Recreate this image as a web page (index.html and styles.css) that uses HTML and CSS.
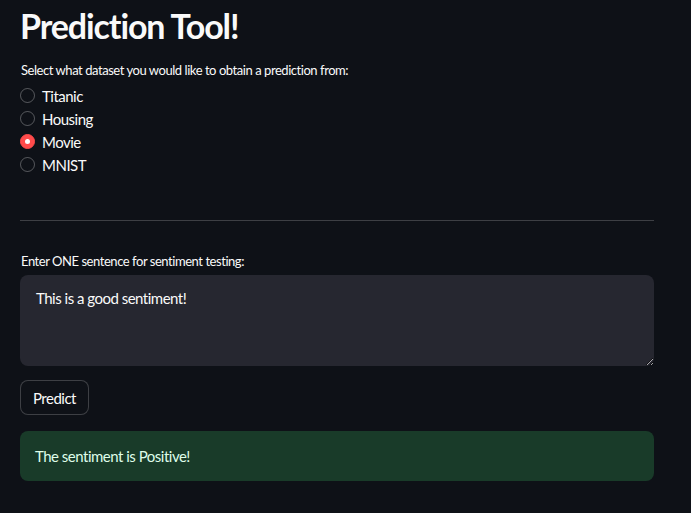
FILE: index.html
```html
<!DOCTYPE html>
<html>
<head>
<meta charset="utf-8">
<link rel="stylesheet" href="styles.css">
</head>
<body>
<main class="page">
  <h1 class="title">Prediction Tool!</h1>
  <div class="field">
    <div class="label">Select what dataset you would like to obtain a prediction from:</div>
    <div class="radios">
      <div class="radio"><span class="dot"></span><span>Titanic</span></div>
      <div class="radio"><span class="dot"></span><span>Housing</span></div>
      <div class="radio checked"><span class="dot"></span><span>Movie</span></div>
      <div class="radio"><span class="dot"></span><span>MNIST</span></div>
    </div>
  </div>
  <hr class="divider">
  <div class="field">
    <div class="label">Enter ONE sentence for sentiment testing:</div>
    <textarea class="area">This is a good sentiment!</textarea>
  </div>
  <button class="btn">Predict</button>
  <div class="success">The sentiment is Positive!</div>
</main>
</body>
</html>
```
FILE: styles.css
```css
* { box-sizing: border-box; }
html, body { margin: 0; padding: 0; background: #0e1117; }
body {
  color: #fafafa;
  font-family: "Lato", "Noto Sans", sans-serif;
}
.page {
  width: 634px;
  margin-left: 20px;
  display: flex;
  flex-direction: column;
}
.title {
  margin: 0;
  padding-top: 6px;
  font-size: 34px;
  letter-spacing: -1.1px;
  font-weight: 700;
  line-height: 40px;
  height: 46px;
}
.field { display: flex; flex-direction: column; }
.label {
  font-size: 13px;
  letter-spacing: -0.45px;
  line-height: 18px;
  margin-top: 15px;
  height: 23px;
  padding-left: 1px;
}
.radios { display: flex; flex-direction: column; }
.radio {
  display: flex;
  align-items: center;
  height: 23px;
  font-size: 15px;
  letter-spacing: -0.5px;
  gap: 7px;
}
.dot {
  width: 15px;
  height: 15px;
  border-radius: 50%;
  border: 1px solid rgba(250,250,250,0.3);
  flex: none;
}
.radio.checked .dot {
  background: #ff4b4b;
  border-color: #ff4b4b;
  display: flex;
  align-items: center;
  justify-content: center;
}
.radio.checked .dot::after {
  content: "";
  width: 5px;
  height: 5px;
  border-radius: 50%;
  background: #fff;
}
.divider {
  margin: 44px 0 0;
  border: none;
  border-top: 1px solid rgba(250,250,250,0.2);
  height: 0;
}
.divider + .field .label { margin-top: 31px; }
.area {
  width: 100%;
  height: 91px;
  background: #262730;
  border: none;
  border-radius: 8px;
  color: #fafafa;
  font-family: inherit;
  font-size: 15px;
  letter-spacing: -0.5px;
  padding: 14px 16px;
  resize: vertical;
  outline: none;
  margin-top: 0;
  display: block;
}
.btn {
  align-self: flex-start;
  margin-top: 14px;
  height: 35px;
  padding: 0 12px;
  background: #0e1117;
  color: #fafafa;
  border: 1px solid rgba(250,250,250,0.2);
  border-radius: 8px;
  font-family: inherit;
  font-size: 15px;
  letter-spacing: -0.5px;
}
.success {
  margin-top: 16px;
  height: 50px;
  background: #193b29;
  color: #dffde9;
  border-radius: 8px;
  padding: 0 15px;
  display: flex;
  align-items: center;
  font-size: 15px;
  letter-spacing: -0.5px;
}
```
